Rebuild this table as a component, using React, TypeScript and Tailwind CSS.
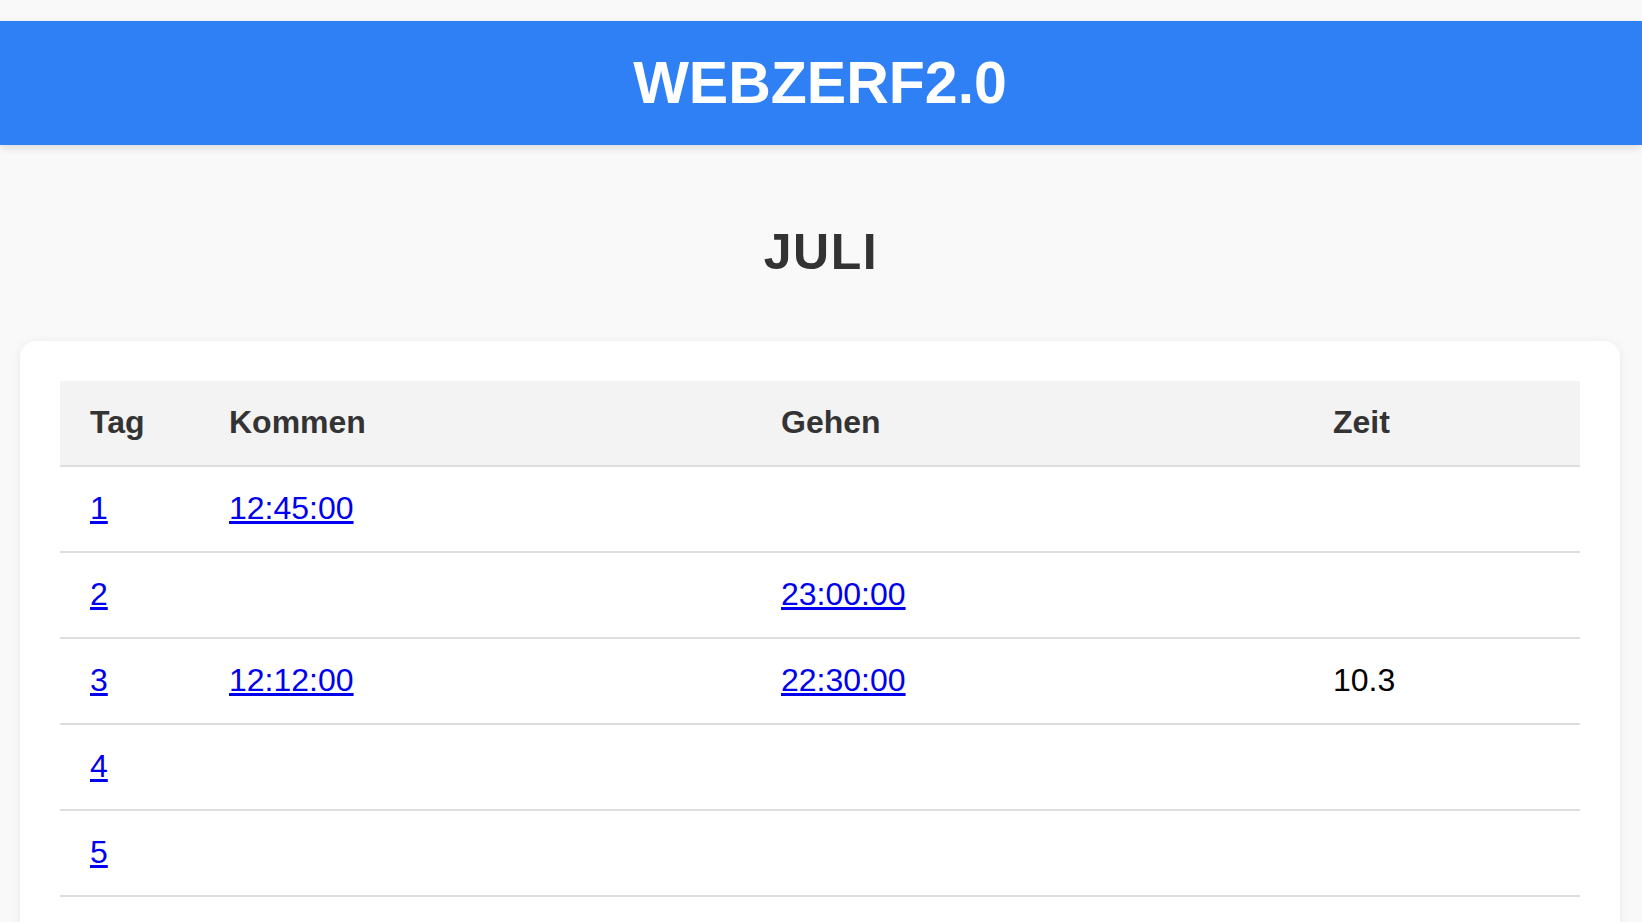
type Entry = { day: number; kommen?: string; gehen?: string; zeit?: string }

const entries: Entry[] = [
  { day: 1, kommen: '12:45:00' },
  { day: 2, gehen: '23:00:00' },
  { day: 3, kommen: '12:12:00', gehen: '22:30:00', zeit: '10.3' },
  ...Array.from({ length: 28 }, (_, i) => ({ day: i + 4 })),
]

export default function App() {
  return (
    <div className="min-h-screen bg-[#f9f9f9] pt-[21px] pb-10 font-['Liberation_Sans',Arial,sans-serif]">
      <header className="flex h-[124px] items-center justify-center bg-[#3080f5] shadow-[0_3px_8px_rgba(0,0,0,0.12)]">
        <h1 className="pr-[2px] text-[59px] font-bold leading-none text-white">WEBZERF2.0</h1>
      </header>

      <h2 className="mt-[80px] mb-[61px] text-center text-[50px] font-bold leading-[55px] tracking-[1.5px] text-[#333]">
        JULI
      </h2>

      <div className="ml-[20px] mr-[22px] rounded-[16px] bg-white p-[40px] shadow-[0_2px_12px_rgba(0,0,0,0.07)]">
        <table className="w-full table-fixed border-collapse text-left text-[32px] leading-[36px]">
          <colgroup>
            <col className="w-[139px]" />
            <col className="w-[552px]" />
            <col className="w-[552px]" />
            <col />
          </colgroup>
          <thead>
            <tr className="border-b-2 border-[#dddddd] bg-[#f3f3f3]">
              <th className="px-[30px] pt-[23px] pb-[25px] font-bold text-[#333]">Tag</th>
              <th className="px-[30px] pt-[23px] pb-[25px] font-bold text-[#333]">Kommen</th>
              <th className="px-[30px] pt-[23px] pb-[25px] font-bold text-[#333]">Gehen</th>
              <th className="px-[30px] pt-[23px] pb-[25px] font-bold text-[#333]">Zeit</th>
            </tr>
          </thead>
          <tbody>
            {entries.map(entry => (
              <tr key={entry.day} className="border-b-2 border-[#dddddd]">
                <td className="px-[30px] pt-[23px] pb-[25px]">
                  <a href="#" className="text-[#0000ee] underline">{entry.day}</a>
                </td>
                <td className="px-[30px] pt-[23px] pb-[25px]">
                  {entry.kommen && <a href="#" className="text-[#0000ee] underline">{entry.kommen}</a>}
                </td>
                <td className="px-[30px] pt-[23px] pb-[25px]">
                  {entry.gehen && <a href="#" className="text-[#0000ee] underline">{entry.gehen}</a>}
                </td>
                <td className="px-[30px] pt-[23px] pb-[25px] text-black">{entry.zeit}</td>
              </tr>
            ))}
          </tbody>
        </table>
      </div>
    </div>
  )
}
